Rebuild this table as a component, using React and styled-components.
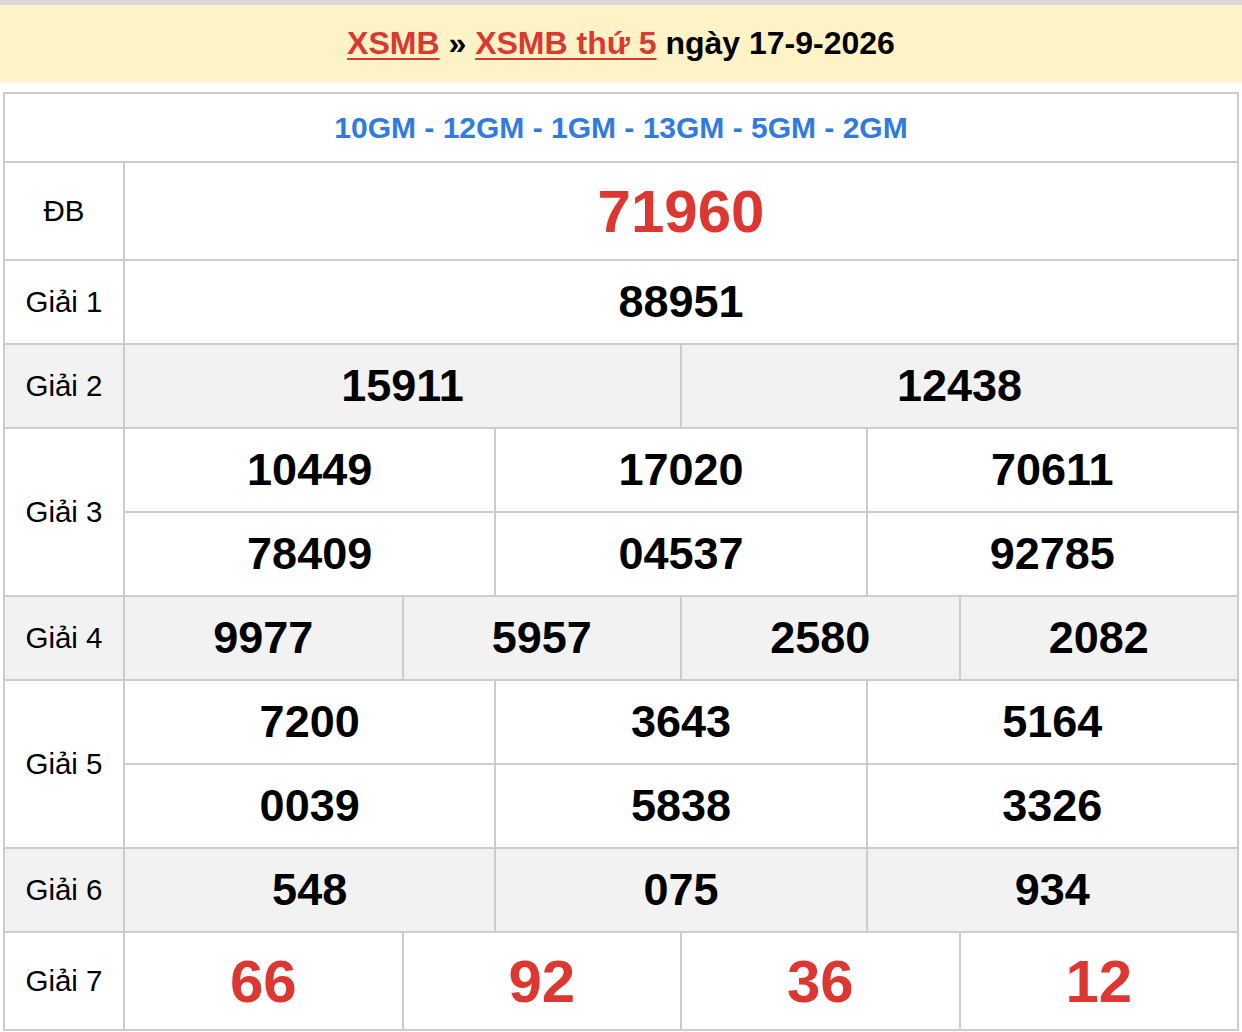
import React from "react";
import styled, { createGlobalStyle } from "styled-components";

const GlobalStyle = createGlobalStyle`
  body {
    margin: 0;
    background: #fff;
    font-family: "Liberation Sans", Arial, Helvetica, sans-serif;
  }
`;

const TopStrip = styled.div`
  height: 5px;
  background: #d9d9d9;
`;

const TitleBar = styled.div`
  height: 77px;
  background: #fdf3c6;
  display: flex;
  align-items: center;
  justify-content: center;
  white-space: pre;
  font-size: 32px;
  font-weight: bold;
  color: #000;
`;

const TitleLink = styled.a`
  color: #dc3831;
  text-decoration: underline;
  text-decoration-thickness: 2px;
  text-underline-offset: 4px;
`;

const Board = styled.div`
  margin: 10px 3px 0;
  border: 2px solid #cccccc;
  background: #cccccc;
  display: flex;
  flex-direction: column;
  gap: 2px;
`;

const HeaderCell = styled.div`
  height: 67px;
  background: #fff;
  display: flex;
  align-items: center;
  justify-content: center;
  color: #2f7be2;
  font-size: 30px;
  font-weight: bold;
`;

const PrizeRow = styled.div`
  display: grid;
  grid-template-columns: 118px 1fr;
  gap: 2px;
`;

const Label = styled.div`
  background: ${(p) => (p.$alt ? "#f2f2f2" : "#fff")};
  display: flex;
  align-items: center;
  justify-content: center;
  font-size: 29.5px;
  color: #000;
`;

const Numbers = styled.div`
  display: grid;
  grid-template-columns: repeat(${(p) => p.$cols}, 1fr);
  gap: 2px;
`;

const Num = styled.div`
  height: ${(p) => (p.$big ? 96 : 82)}px;
  background: ${(p) => (p.$alt ? "#f2f2f2" : "#fff")};
  display: flex;
  align-items: center;
  justify-content: center;
  font-weight: bold;
  font-size: ${(p) => (p.$big ? 60 : 45)}px;
  color: ${(p) => (p.$red ? "#dc3831" : "#000")};
`;

const prizes = [
  { label: "ĐB", cols: 1, nums: ["71960"], big: true, red: true },
  { label: "Giải 1", cols: 1, nums: ["88951"] },
  { label: "Giải 2", cols: 2, nums: ["15911", "12438"] },
  { label: "Giải 3", cols: 3, nums: ["10449", "17020", "70611", "78409", "04537", "92785"] },
  { label: "Giải 4", cols: 4, nums: ["9977", "5957", "2580", "2082"] },
  { label: "Giải 5", cols: 3, nums: ["7200", "3643", "5164", "0039", "5838", "3326"] },
  { label: "Giải 6", cols: 3, nums: ["548", "075", "934"] },
  { label: "Giải 7", cols: 4, nums: ["66", "92", "36", "12"], big: true, red: true },
];

export default function App() {
  return (
    <>
      <GlobalStyle />
      <TopStrip />
      <TitleBar>
        <TitleLink href="#">XSMB</TitleLink>
        {" » "}
        <TitleLink href="#">XSMB thứ 5</TitleLink>
        {" ngày 17-9-2026"}
      </TitleBar>
      <Board>
        <HeaderCell>10GM - 12GM - 1GM - 13GM - 5GM - 2GM</HeaderCell>
        {prizes.map((p, i) => {
          const alt = i % 2 === 0 && i > 0;
          return (
            <PrizeRow key={p.label}>
              <Label $alt={alt}>{p.label}</Label>
              <Numbers $cols={p.cols}>
                {p.nums.map((n, j) => (
                  <Num key={j} $alt={alt} $big={p.big} $red={p.red}>
                    {n}
                  </Num>
                ))}
              </Numbers>
            </PrizeRow>
          );
        })}
      </Board>
    </>
  );
}
